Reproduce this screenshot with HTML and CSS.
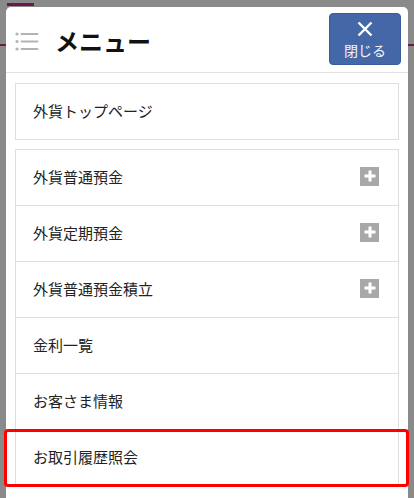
FILE: index.html
```html
<!DOCTYPE html>
<html lang="ja">
<head>
<meta charset="utf-8">
<title>メニュー</title>
<link rel="stylesheet" href="styles.css">
</head>
<body>
<div class="panel">
  <header class="head">
    <div class="brand">
      <svg class="burger" width="24" height="19" viewBox="0 0 24 19" aria-hidden="true">
        <circle cx="2" cy="2" r="1.6"/>
        <circle cx="2" cy="9.5" r="1.6"/>
        <circle cx="2" cy="17" r="1.6"/>
        <rect x="5.5" y="1" width="18" height="2" rx="1"/>
        <rect x="5.5" y="8.5" width="18" height="2" rx="1"/>
        <rect x="5.5" y="16" width="18" height="2" rx="1"/>
      </svg>
      <h1 class="title">メニュー</h1>
    </div>
    <button class="close" type="button">
      <svg class="close-x" width="16" height="16" viewBox="0 0 16 16" aria-hidden="true">
        <path d="M1.5 1.5 L14.5 14.5 M14.5 1.5 L1.5 14.5"/>
      </svg>
      <span class="close-label">閉じる</span>
    </button>
  </header>
  <nav class="menu">
    <ul class="group">
      <li class="item">外貨トップページ</li>
    </ul>
    <ul class="group">
      <li class="item"><span>外貨普通預金</span><span class="plus"></span></li>
      <li class="item"><span>外貨定期預金</span><span class="plus"></span></li>
      <li class="item"><span>外貨普通預金積立</span><span class="plus"></span></li>
      <li class="item">金利一覧</li>
      <li class="item">お客さま情報</li>
      <li class="item current">お取引履歴照会</li>
    </ul>
  </nav>
</div>
</body>
</html>
```

FILE: styles.css
```css
html, body {
  margin: 0;
  padding: 0;
  height: 100%;
  overflow: hidden;
}

body {
  background-color: #8a8a8a;
  background-image:
    linear-gradient(#6a1a4a, #6a1a4a),
    linear-gradient(#6a1a4a, #6a1a4a),
    linear-gradient(#6a1a4a, #6a1a4a);
  background-size: 27px 3px, 6px 2px, 6px 2px;
  background-position: 7px 3px, 0 44px, right 0 top 44px;
  background-repeat: no-repeat;
  font-family: "Noto Sans CJK JP", "Noto Sans", sans-serif;
  color: #222;
}

.panel {
  margin: 7px 6px 0;
  min-height: calc(100% - 7px);
  background: #fff;
  border-radius: 5px 5px 0 0;
}

.head {
  height: 65px;
  border-bottom: 1px solid #e2e2e2;
  padding: 0 7px 0 9px;
  display: flex;
  align-items: center;
  justify-content: space-between;
}

.brand {
  display: flex;
  align-items: center;
  gap: 16px;
  padding-top: 3px;
}

.burger {
  fill: #b3b3b3;
  display: block;
}

.title {
  margin: 0;
  font-size: 24px;
  font-weight: 700;
  color: #111;
  letter-spacing: 0;
  line-height: 1;
}

.close {
  width: 72px;
  height: 52px;
  margin-top: -1px;
  background: #4467a7;
  border: 1px solid #3b5c99;
  border-radius: 4px;
  color: #fff;
  display: flex;
  flex-direction: column;
  align-items: center;
  justify-content: center;
  gap: 6px;
  padding: 0 0 0;
  font-family: inherit;
}

.close-x {
  display: block;
  stroke: #fff;
  stroke-width: 2.4;
  fill: none;
}

.close-label {
  font-size: 14px;
  line-height: 1;
  color: #f2f5fb;
}

.menu {
  padding: 10px 9px 0;
}

.group {
  list-style: none;
  margin: 0 0 9px;
  padding: 0;
  border: 1px solid #dedede;
}

.item {
  height: 55px;
  box-sizing: border-box;
  padding: 0 19px 2px 17px;
  display: flex;
  align-items: center;
  justify-content: space-between;
  font-size: 15px;
  color: #222;
}

.item + .item {
  border-top: 1px solid #dedede;
  height: 56px;
}

.plus {
  width: 19px;
  height: 19px;
  background: #a8a8a8;
  position: relative;
  margin-top: -1px;
}

.plus::before,
.plus::after {
  content: "";
  position: absolute;
  background: #fff;
  left: 50%;
  top: 50%;
  transform: translate(-50%, -50%);
}

.plus::before {
  width: 11px;
  height: 3px;
}

.plus::after {
  width: 3px;
  height: 11px;
}

.current {
  position: relative;
}

.current::after {
  content: "";
  position: absolute;
  top: -1px;
  bottom: -2px;
  left: -12px;
  right: -11px;
  border: 3px solid #ff0000;
  border-radius: 4px;
}
```
